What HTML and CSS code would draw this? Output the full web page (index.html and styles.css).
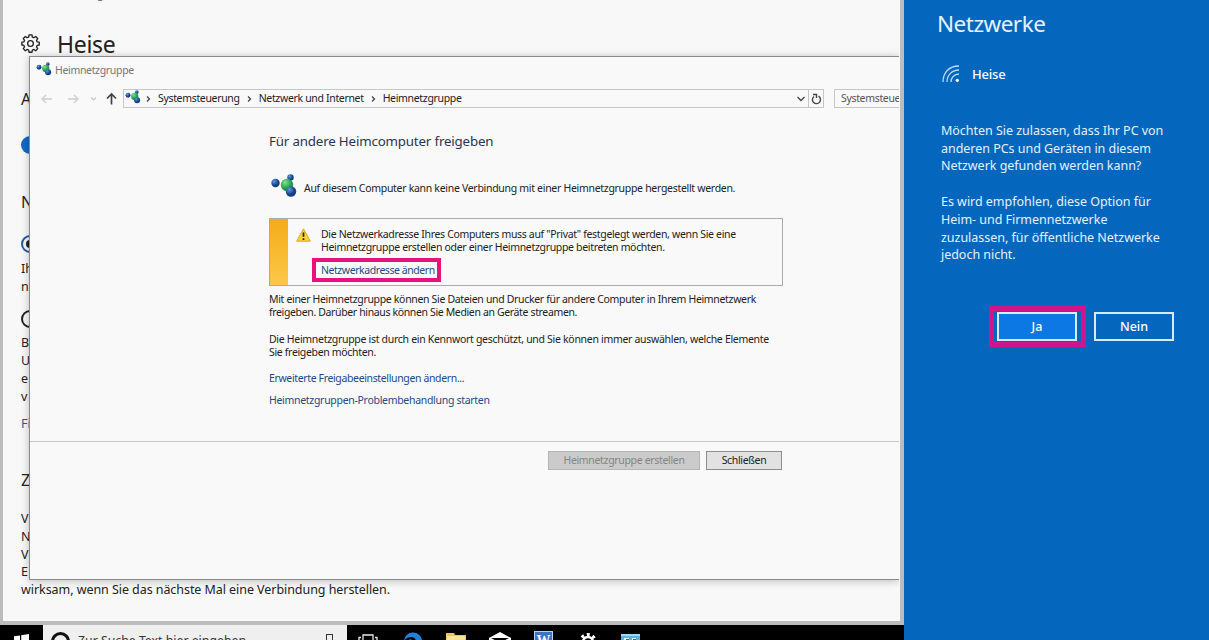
FILE: index.html
```html
<!DOCTYPE html>
<html lang="de">
<head>
  <meta charset="UTF-8">
  <title>Heimnetzgruppe</title>
  <link rel="stylesheet" href="styles.css">
</head>
<body>
  <svg class="defs" width="0" height="0">
    <defs>
      <radialGradient id="blue" cx="35%" cy="30%"><stop offset="0" stop-color="#5b9be0"/><stop offset="1" stop-color="#123f86"/></radialGradient>
      <radialGradient id="green" cx="35%" cy="30%"><stop offset="0" stop-color="#7fe08c"/><stop offset="1" stop-color="#259a4c"/></radialGradient>
      <symbol id="homegroup" viewBox="0 0 26 24">
        <circle cx="4.5" cy="9" r="4.2" fill="url(#blue)"/>
        <circle cx="19.5" cy="3.5" r="3.2" fill="url(#blue)"/>
        <circle cx="16" cy="11" r="6.2" fill="url(#green)"/>
        <circle cx="20" cy="17.5" r="5.2" fill="url(#blue)"/>
      </symbol>
    </defs>
  </svg>

  <div class="screen">
    <div class="desktop">
      <main class="settings">
        <div class="crumb">Einstellungen</div>
        <div class="heading">
          <svg width="19" height="19" viewBox="0 0 20 20" fill="none" stroke="#222" stroke-width="1.4" stroke-linejoin="round">
            <path d="M8.4 1h3.2l.3 2.2 1.7.7 1.8-1.3 2.2 2.2-1.3 1.8.7 1.7 2.2.3v3l-2.2.3-.7 1.7 1.3 1.8-2.2 2.2-1.8-1.3-1.7.7-.3 2.2H8.4l-.3-2.2-1.7-.7-1.8 1.3-2.2-2.2 1.3-1.8L3 11.900 .9 11.600v-3L3 8.300l.7-1.700L2.400 4.800l2.200-2.200 1.800 1.300 1.700-.7z"/>
            <circle cx="10" cy="10" r="3"/>
          </svg>
          <h1>Heise</h1>
        </div>
        <div class="sub first">A</div>
        <div class="toggle"></div>
        <div class="sub second">N</div>
        <div class="radio checked"></div>
        <p class="lines one">Ih<br>n</p>
        <div class="radio"></div>
        <p class="lines two">B<br>U<br>e<br>v</p>
        <p class="lines link">Fi</p>
        <div class="sub third">Z</div>
        <p class="lines four">V<br>N<br>V<br>E<br>wirksam, wenn Sie das nächste Mal eine Verbindung herstellen.</p>
      </main>

      <section class="window">
        <header class="titlebar">
          <svg width="16" height="14"><use href="#homegroup"/></svg>
          <span>Heimnetzgruppe</span>
        </header>

        <nav class="navbar">
          <div class="arrows">
            <svg width="80" height="14" viewBox="0 0 80 14" fill="none">
              <path d="M11 7H1M5 3L1 7l4 4M27 7h10M33 3l4 4-4 4" stroke="#cdcdcd" stroke-width="1.300"/>
              <path d="M50 5.500l2.500 2.500L55 5.500" stroke="#c4c4c4" stroke-width="1.200"/>
              <path d="M70.500 12.500V2M66 6.500L70.500 2l4.500 4.500" stroke="#444" stroke-width="1.700"/>
            </svg>
          </div>
          <div class="address">
            <svg class="home" width="16" height="14"><use href="#homegroup"/></svg>
            <svg class="chev" width="5" height="8" viewBox="0 0 5 8"><path d="M1 1.500L3.500 4 1 6.500"/></svg>
            <span>Systemsteuerung</span>
            <svg class="chev" width="5" height="8" viewBox="0 0 5 8"><path d="M1 1.500L3.500 4 1 6.500"/></svg>
            <span>Netzwerk und Internet</span>
            <svg class="chev" width="5" height="8" viewBox="0 0 5 8"><path d="M1 1.500L3.500 4 1 6.500"/></svg>
            <span>Heimnetzgruppe</span>
            <svg class="drop" width="10" height="8" viewBox="0 0 10 8"><path d="M1.500 2L5 5.500 8.500 2"/></svg>
          </div>
          <div class="refresh">
            <svg width="11" height="12" viewBox="0 0 11 12" fill="none" stroke="#444" stroke-width="1.400"><path d="M7.500 3.200a4 4 0 1 1-4.500 .3M2 1.500h3.500V5"/></svg>
          </div>
          <div class="search"><span>Systemsteue</span></div>
        </nav>

        <div class="content">
          <h2>Für andere Heimcomputer freigeben</h2>
          <div class="status">
            <svg width="26" height="24"><use href="#homegroup"/></svg>
            <span>Auf diesem Computer kann keine Verbindung mit einer Heimnetzgruppe hergestellt werden.</span>
          </div>
          <div class="warning">
            <div class="stripe"></div>
            <svg class="triangle" width="15" height="14" viewBox="0 0 15 14">
              <path d="M7.500 .8L14.300 13.200H.7z" fill="#fcd437" stroke="#d9a520" stroke-linejoin="round"/>
              <path d="M7.500 4.500v4.300M7.500 10.200v1.700" stroke="#222" stroke-width="1.700"/>
            </svg>
            <div class="message">
              <div>Die Netzwerkadresse Ihres Computers muss auf "Privat" festgelegt werden, wenn Sie eine</div>
              <div>Heimnetzgruppe erstellen oder einer Heimnetzgruppe beitreten möchten.</div>
              <a class="marked">Netzwerkadresse ändern</a>
            </div>
          </div>
          <p class="info">Mit einer Heimnetzgruppe können Sie Dateien und Drucker für andere Computer in Ihrem Heimnetzwerk<br><span class="tight">freigeben. Darüber hinaus können Sie Medien an Geräte streamen.</span></p>
          <p class="info"><span class="loose">Die Heimnetzgruppe ist durch ein Kennwort geschützt, und Sie können immer auswählen, welche Elemente</span><br>Sie freigeben möchten.</p>
          <a class="task tight">Erweiterte Freigabeeinstellungen ändern...</a>
          <a class="task loose">Heimnetzgruppen-Problembehandlung starten</a>
        </div>

        <footer class="actions">
          <button class="create" disabled>Heimnetzgruppe erstellen</button>
          <button class="close">Schließen</button>
        </footer>
      </section>

      <div class="taskbar">
        <div class="start">
          <svg width="16" height="16" viewBox="0 0 16 16" fill="#fff"><path d="M0 2.300l6-.9V8H0zM7.200 1.200L15 0v8H7.200zM0 9h6v6l-6-1zM7.200 9H15v7l-7.800-1z"/></svg>
        </div>
        <div class="searchbox">
          <i class="cortana"></i>
          <span>Zur Suche Text hier eingeben</span>
          <i class="mic"></i>
        </div>
        <div class="apps">
          <svg width="20" height="16" viewBox="0 0 20 16" fill="none" stroke="#e8e8e8" stroke-width="1.300"><path d="M5 1h10v13H5zM3 3.500H1v9h2M17 3.500h2v9h-2"/></svg>
          <svg width="20" height="20" viewBox="0 0 20 20"><path d="M1 9a9 9 0 0 1 18 1v2H7c0 6 8 5 10 3v3C10 22 2 18 3 12c1-4 4-5 6-5-2 1-2 3-2 3h6c0-7-9-6-12-1z" fill="#2180d8"/></svg>
          <svg width="20" height="16" viewBox="0 0 20 16"><path d="M0 1h8l1 2h11v13H0z" fill="#eac75f"/><path d="M1 4h18v12H1z" fill="#f9e396"/></svg>
          <svg width="22" height="17" viewBox="0 0 22 17"><path d="M0 6l11-6 11 6v11H0z" fill="#fff"/><path d="M2 6h18l-9 5z" fill="#000"/></svg>
          <div class="word">W</div>
          <svg width="20" height="20" viewBox="0 0 20 20" fill="none" stroke="#fff"><circle cx="10" cy="10" r="5" stroke-width="2.500"/><circle cx="10" cy="10" r="7.500" stroke-width="3" stroke-dasharray="2.950" stroke-dashoffset="1.500"/></svg>
          <svg width="19" height="16" viewBox="0 0 19 16"><path d="M0 0h19v16H0z" fill="#55b4e0"/><path d="M0 0h19v2H0z" fill="#a3d9ee"/><path d="M3 4h5v4H3zM11 4h4v4h-4z" fill="#e4f4f8"/><path d="M5 5h3v3H5zM12 5h3v3h-3z" fill="#246b9d"/></svg>
        </div>
      </div>
    </div>

    <aside class="networks">
      <h2>Netzwerke</h2>
      <div class="network">
        <svg width="18" height="18" viewBox="0 0 18 18" fill="none" stroke="#b9ddf8" stroke-width="1.300">
          <path d="M1 17C1 7.500 7 1 17 1M5 17c0-7 5-12 12-12M9 17c0-4.500 3.500-8 8-8"/>
          <circle cx="15.300" cy="15.300" r="1.600" fill="#fff" stroke="none"/>
        </svg>
        <span>Heise</span>
      </div>
      <p>Möchten Sie zulassen, dass Ihr PC von<br>anderen PCs und Geräten in diesem<br>Netzwerk gefunden werden kann?</p>
      <p>Es wird empfohlen, diese Option für<br>Heim- und Firmennetzwerke<br>zuzulassen, für öffentliche Netzwerke<br>jedoch nicht.</p>
      <div class="choice">
        <div class="highlight"><button class="yes">Ja</button></div>
        <button>Nein</button>
      </div>
    </aside>
  </div>
</body>
</html>
```
FILE: styles.css
```css
* {
  box-sizing: border-box;
}

body {
  margin: 0;
  font-family: "Noto Sans", "Open Sans", sans-serif;
  color: #222;
}

h1, h2, p {
  margin: 0;
  font-weight: normal;
}

svg {
  display: block;
  flex: none;
}

button {
  font-family: inherit;
  letter-spacing: inherit;
  padding: 0;
}

.defs {
  position: absolute;
}

.screen {
  display: flex;
  width: 1209px;
  height: 640px;
  overflow: hidden;
  white-space: nowrap;
}

.desktop {
  position: relative;
  display: flex;
  flex-direction: column;
  width: 904px;
}

/* settings page in the back */
.settings {
  height: 625px;
  padding-left: 18px;
  border: solid #bcbcbc;
  border-width: 0 4px 4px 3px;
  background: #f8f8f8;
  overflow: hidden;
}

.crumb {
  height: 30px;
  padding-left: 28px;
  font-size: 10.5px;
  line-height: 14px;
  color: #666;
  transform: translateY(-13px);
}

.heading {
  display: flex;
  align-items: center;
  gap: 17px;
  height: 27px;
}

.heading h1 {
  font-size: 23px;
  letter-spacing: -0.3px;
}

.sub {
  height: 24px;
  font-size: 16px;
  line-height: 24px;
}

.first {
  margin-top: 30px;
}

.toggle {
  width: 36px;
  height: 18px;
  margin-top: 25px;
  border-radius: 9px;
  background: #1469c7;
}

.second {
  margin-top: 36px;
}

.radio {
  width: 18px;
  height: 18px;
  border: 2px solid #222;
  border-radius: 50%;
}

.radio.checked {
  margin-top: 21px;
  padding: 3px;
  border-color: #245ba0;
}

.radio.checked::before {
  content: "";
  display: block;
  width: 8px;
  height: 8px;
  border-radius: 50%;
  background: #222;
}

.lines {
  font-size: 12.5px;
  line-height: 18px;
}

.one {
  margin: 7px 0 14px;
}

.two {
  margin-top: 6px;
}

.link {
  margin-top: 9px;
  color: #245ba0;
}

.third {
  margin-top: 35px;
}

.four {
  margin-top: 18px;
  line-height: 17.8px;
  letter-spacing: -0.06px;
}

/* control panel window */
.window {
  position: absolute;
  left: 29px;
  top: 56px;
  width: 870px;
  height: 524px;
  border: 1px solid #8a8a8a;
  border-right: 0;
  background: #f9f9f9;
  box-shadow: 0 1px 8px rgba(0, 0, 0, 0.25);
  clip-path: inset(-10px 0 -10px -10px);
  font-size: 10.5px;
  letter-spacing: -0.33px;
}

.titlebar {
  display: flex;
  align-items: center;
  gap: 3px;
  height: 26px;
  padding-left: 6px;
  color: #777;
}

.titlebar svg {
  margin-bottom: 3px;
}

.navbar {
  display: flex;
  align-items: center;
  height: 31px;
}

.arrows {
  width: 93px;
  padding-left: 11px;
}

.address,
.refresh,
.search {
  display: flex;
  align-items: center;
  height: 19px;
  border: 1px solid #c6c6c6;
}

.address {
  width: 686px;
}

.address .home {
  margin: 0 5px 4px 1px;
}

.chev,
.drop {
  fill: none;
  stroke: #444;
  stroke-width: 1.3;
}

.address span {
  margin: 0 7px 2px 7px;
}

.drop {
  margin-left: auto;
  margin-right: 2px;
}

.refresh {
  justify-content: center;
  width: 15px;
  border-left: 0;
}

.search {
  flex: 1;
  margin-left: 10px;
  padding-left: 6px;
  border-right: 0;
  overflow: hidden;
  color: #555;
}

.search span {
  margin-bottom: 2px;
}

.content {
  height: 327px;
  padding: 17px 0 0 239px;
}

.content h2 {
  font-size: 13.3px;
  line-height: 20px;
  letter-spacing: -0.16px;
  color: #2b3452;
}

.status {
  display: flex;
  gap: 7px;
  height: 44px;
  margin-top: 23px;
  padding-left: 2px;
  letter-spacing: -0.3px;
}

.status span {
  padding-top: 7px;
}

.warning {
  display: flex;
  width: 514px;
  height: 68px;
  border: 1px solid #aaa;
}

.stripe {
  width: 18px;
  background: linear-gradient(#f4ac18, #fcc84a);
}

.triangle {
  margin: 9px 10px 0 8px;
}

.message {
  padding-top: 9px;
  line-height: 13.4px;
}

.marked {
  display: inline-block;
  height: 24px;
  margin: 3px 0 0 -9px;
  padding: 0 2px 0 5px;
  border: 4px solid #e8127f;
  line-height: 16px;
  letter-spacing: -0.44px;
  color: #234a85;
}

.info {
  margin-top: 7px;
  line-height: 13.4px;
}

.info + .info {
  margin-top: 13px;
}

.tight {
  letter-spacing: -0.36px;
}

.loose {
  letter-spacing: -0.3px;
}

.task {
  display: block;
  margin-top: 10px;
  line-height: 16px;
  color: #234a85;
}

.task + .task {
  margin-top: 6px;
}

.actions {
  display: flex;
  gap: 6px;
  height: 138px;
  padding: 9px 0 0 518px;
  border-top: 1px solid #c8c8c8;
}

.actions button {
  height: 19px;
  border: 1px solid #8d8d8d;
  background: #e2e2e2;
  font-size: 10.5px;
  line-height: 17px;
  color: #222;
}

.actions .create {
  width: 152px;
  border-color: #b5b5b5;
  background: #cbcbcb;
  color: #858585;
}

.close {
  width: 76px;
}

/* taskbar, cut off at the bottom edge */
.taskbar {
  display: flex;
  height: 15px;
  background: #000;
  overflow: hidden;
}

.start {
  width: 43px;
  padding: 9px 0 0 14px;
}

.searchbox {
  display: flex;
  width: 304px;
  padding-left: 8px;
  background: #efefef;
  font-size: 12.3px;
  color: #333;
}

.cortana {
  width: 19px;
  height: 19px;
  margin-top: 7px;
  border: 3px solid #111;
  border-radius: 50%;
}

.searchbox span {
  margin: 8px 0 0 8px;
  line-height: 16px;
}

.mic {
  width: 7px;
  height: 12px;
  margin: 9px 14px 0 auto;
  border: 1px solid #333;
}

.apps {
  display: flex;
  align-items: flex-start;
  gap: 23px;
  padding: 7px 0 0 11px;
}

.apps svg:nth-child(1) {
  margin: 2px 2px 0 0;
}

.apps svg:nth-child(6) {
  margin-left: 2px;
}

.apps svg:nth-child(7) {
  margin-top: 2px;
}

.word {
  width: 19px;
  height: 18px;
  margin-top: -1px;
  border: 1px solid #b9d3f1;
  background: #3d72c6;
  font: bold 14px/18px "Liberation Serif", serif;
  text-align: center;
  color: #fff;
}

/* network flyout */
.networks {
  width: 305px;
  padding: 8px 0 0 37px;
  background: #0467bd;
  color: #e3f1fc;
}

.networks h2 {
  margin-left: -4px;
  font-size: 22.5px;
  line-height: 32px;
  letter-spacing: -0.5px;
}

.network {
  display: flex;
  align-items: center;
  gap: 12px;
  height: 20px;
  margin: 24px 0 38px 1px;
  font-size: 13px;
  font-weight: 500;
  letter-spacing: -0.2px;
  color: #fff;
}

.networks p {
  margin-bottom: 18px;
  font-size: 12.5px;
  line-height: 17.7px;
  letter-spacing: -0.03px;
}

.choice {
  display: flex;
  align-items: center;
  gap: 8px;
  margin: 42px 0 0 48px;
}

.highlight {
  padding: 1px 4px 1px 3px;
  border: 5px solid #d0148c;
}

.choice button {
  display: block;
  width: 80px;
  height: 29px;
  padding-top: 1px;
  border: 2px solid #d6eafb;
  background: #0467bd;
  font-size: 12.5px;
  font-weight: 500;
  color: #fff;
}

.choice .yes {
  background: #0b78e3;
}
```
